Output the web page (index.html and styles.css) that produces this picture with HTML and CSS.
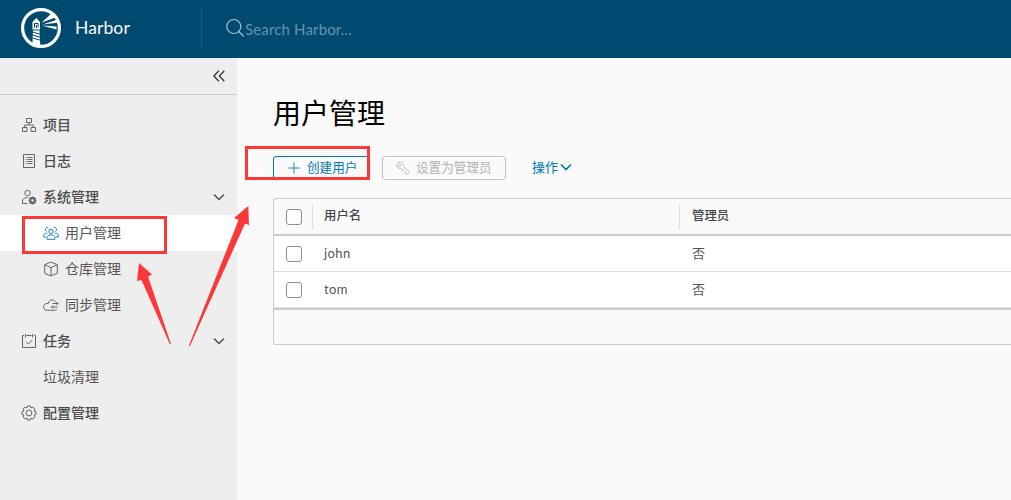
FILE: index.html
```html
<!DOCTYPE html>
<html lang="zh-CN">
<head>
    <meta charset="UTF-8" />
    <meta name="viewport" content="width=device-width, initial-scale=1.0" />
    <title>Harbor</title>
    <link rel="stylesheet" href="styles.css">
</head>
<body>
    <header class="header">
        <svg class="logo" viewBox="0 0 40 40">
            <circle cx="20" cy="20" r="18.4" fill="none" stroke="#fff" stroke-width="3.2" />
            <path d="M20.500 14.800L31.500 4.500l4 4.500zM21.500 16.600L36.500 11.500v3.300zM21 17.600l14.500 1v3z" fill="#fff" />
            <path d="M15.300 10l3.700 4v7.500h-7.500V14z" fill="#fff" />
            <path d="M13.500 19.500v-4h3.600v4M15.300 17v3" fill="none" stroke="#004a70" stroke-width="1" />
            <path d="M12 22.500h6.500l.8 16h-8z" fill="#fff" />
            <path d="M11.500 24l7.500 2.200M11.500 27l7.700 2.200M11.500 30l8 2.200" stroke="#004a70" stroke-width="1" />
        </svg>
        <span class="brand">Harbor</span>
        <div class="search">
            <svg class="search-icon" viewBox="0 0 20 20">
                <circle cx="8.800" cy="8.500" r="7" />
                <path d="M13.700 13.500L18.800 18.500" />
            </svg>
            <span>Search Harbor...</span>
        </div>
    </header>

    <div class="container">
        <nav class="sidenav">
            <div class="collapse">
                <svg viewBox="0 0 12 12"><path d="M5.800 .8L.9 6l4.900 5.200M11.300 .8L6.400 6l4.900 5.200" /></svg>
            </div>
            <a class="item main">
                <svg class="icon" viewBox="0 0 16 16"><path d="M5.500 1.500h5v4h-5zM1.500 10.500h4.500v4H1.500zM10 10.500h4.500v4H10zM8 5.500v2.500M3.700 10.500V8h8.600v2.500" /></svg>
                <span>项目</span>
            </a>
            <a class="item main">
                <svg class="icon" viewBox="0 0 16 16"><path d="M2.500 1.500h11v13h-11zM4.500 4.500h1M6.500 4.500h5M4.500 6.500h1M6.500 6.500h5M4.500 8.500h1M6.500 8.500h5M4.500 10.500h1M6.500 10.500h5" /></svg>
                <span>日志</span>
            </a>
            <a class="item main">
                <svg class="icon" viewBox="0 0 16 16">
                    <circle cx="6.500" cy="4" r="2.700" />
                    <path d="M6.500 14.500h-5V11c1.300-1.700 3-2.500 5.500-2.500" />
                    <circle cx="11.500" cy="11.500" r="2.300" stroke-width="2.200" />
                    <path d="M11.500 7.600v1.200M11.500 14.200v1.200M7.600 11.500h1.200M14.200 11.500h1.200M8.700 8.700l.9.900M13.400 13.400l.9.900M8.700 14.300l.9-.9M13.400 9.600l.9-.9" stroke-width="1.700" />
                </svg>
                <span>系统管理</span>
                <svg class="caret" viewBox="0 0 12 12"><path d="M1 3.500l5 5 5-5" /></svg>
            </a>
            <a class="item sub active">
                <svg class="icon" viewBox="0 0 16 16">
                    <circle cx="8" cy="6.300" r="2.200" />
                    <path d="M4 14.300v-2.600c2-2.400 6-2.400 8 0v2.600zM5.300 2.700a2 2 0 1 0-1.500 3.700M10.700 2.700a2 2 0 1 1 1.500 3.700M4.500 8.300C3 8 1.800 8.500.8 9.500V12H3M11.500 8.300c1.500-.3 2.700.2 3.700 1.200V12H13" />
                </svg>
                <span>用户管理</span>
            </a>
            <a class="item sub">
                <svg class="icon" viewBox="0 0 16 16"><path d="M8 1l6.300 2.700v8.600L8 15l-6.300-2.700V3.700zM1.700 3.700L8 6.600l6.300-2.900M8 6.600V15" /></svg>
                <span>仓库管理</span>
            </a>
            <a class="item sub">
                <svg class="icon" viewBox="0 0 16 16"><path d="M12.500 4.800C10.500 1.800 6 2.200 5.300 6.500 2 6-.3 8.500.8 11c.7 1.700 1.700 2.300 3.200 2.300h7c1.300 0 2.300-.3 2.800-1.300M9.500 6.500H15M13.500 5l1.500 1.500L13.500 8M14.500 10H8.500M10 8.500L8.500 10l1.500 1.500" /></svg>
                <span>同步管理</span>
            </a>
            <a class="item main">
                <svg class="icon" viewBox="0 0 16 16"><path d="M3 2.500H1.500v12h13v-12H13M5.500 2.500h5M4.500 1v3.500M11.500 1v3.500M5 8.700l2.400 2.400L11.300 7" /></svg>
                <span>任务</span>
                <svg class="caret" viewBox="0 0 12 12"><path d="M1 3.500l5 5 5-5" /></svg>
            </a>
            <a class="item leaf"><span>垃圾清理</span></a>
            <a class="item main">
                <svg class="icon" viewBox="0 0 16 16">
                    <circle cx="8" cy="8" r="2.900" />
                    <path d="M6.600 1h2.800l.5 1.900 1.900-.9 2.100 2.100-.9 1.900 2 .6v2.800l-2 .6.9 1.900-2.100 2.100-1.900-.9-.5 1.900H6.600l-.5-1.900-1.900.9-2.100-2.100.9-1.900-2-.6V6.600l2-.6-.9-1.900L4.200 2l1.900.9z" />
                </svg>
                <span>配置管理</span>
            </a>
        </nav>

        <main class="content">
            <h1>用户管理</h1>
            <div class="actions">
                <button class="btn btn-create">
                    <svg viewBox="0 0 16 16"><path d="M8 1.500v13M1.500 8h13" /></svg>
                    <span>创建用户</span>
                </button>
                <button class="btn btn-admin" disabled>
                    <svg viewBox="0 0 16 16"><path d="M2.300 1.500l2.900 2.800-.3 1.700-1.700.3L.9 3.800C.5 6 1.500 8.300 4 8.500l1.500-.2 6.300 6.200c1.600 1.300 3.600-.8 2.500-2.400L8.200 6c.8-3-1.900-6-5.900-4.500z" /><path d="M12.500 12.500h.5" /></svg>
                    <span>设置为管理员</span>
                </button>
                <a class="dropdown">操作<svg viewBox="0 0 12 12"><path d="M1 3.500l5 5 5-5" /></svg></a>
            </div>

            <div class="datagrid">
                <div class="row head">
                    <div class="check"><i class="box"></i></div>
                    <div class="cell name">用户名</div>
                    <div class="cell">管理员</div>
                </div>
                <div class="row">
                    <div class="check"><i class="box"></i></div>
                    <div class="cell name">john</div>
                    <div class="cell">否</div>
                </div>
                <div class="row">
                    <div class="check"><i class="box"></i></div>
                    <div class="cell name">tom</div>
                    <div class="cell">否</div>
                </div>
                <div class="foot"></div>
            </div>
        </main>
    </div>

    <!-- red marks over the page -->
    <svg class="marks" viewBox="0 0 1011 500">
        <rect x="23.500" y="217.500" width="142" height="35" />
        <rect x="246.500" y="147.500" width="122" height="31" />
        <path d="M139 263l13 11.500-4 2L171 344l-1 .5L141.500 280l-4.500 1z" />
        <path d="M248.300 206l.7 19-4-1.500L190 346l-1-.5L238.500 220l-4.500-2z" />
    </svg>
</body>
</html>
```
FILE: styles.css
```css
* {
    box-sizing: border-box;
}

body {
    margin: 0;
    height: 500px;
    overflow: hidden;
    font-family: Lato, "Noto Sans CJK SC", sans-serif;
    font-size: 14px;
    color: #565656;
    background-color: #fafafa;
}

svg {
    flex: none;
    fill: none;
    stroke: currentColor;
}

.header {
    display: flex;
    align-items: center;
    height: 58px;
    padding-left: 21px;
    background-color: #004a70;
    color: #fafafa;
}

.logo {
    width: 40px;
    height: 40px;
    margin-top: -2px;
    stroke: none;
}

.brand {
    width: 126px;
    margin: -4px 0 0 14px;
    font-size: 17.5px;
    letter-spacing: 0.1px;
}

.search {
    display: flex;
    align-items: center;
    height: 40px;
    margin-top: -2px;
    padding-left: 23px;
    border-left: 1px solid #1c5f82;
    color: #6593ab;
    font-size: 15px;
    letter-spacing: 0.15px;
}

.search span {
    margin-top: 1px;
}

.search-icon {
    width: 20px;
    height: 20px;
    color: #a8c3d1;
    stroke-width: 1.2;
}

.container {
    display: flex;
    height: 442px;
}

.sidenav {
    flex: none;
    width: 237px;
    background-color: #eee;
}

.collapse {
    display: flex;
    justify-content: flex-end;
    align-items: center;
    height: 37px;
    margin-bottom: 12px;
    padding-right: 12px;
    border-bottom: 1px solid #ccc;
    color: #333;
}

.collapse svg {
    width: 12px;
    height: 12px;
    stroke-width: 1.3;
}

.item {
    display: flex;
    align-items: center;
    height: 36px;
    padding: 0 12px 0 21px;
    line-height: 36px;
}

.item.main {
    font-weight: 500;
    color: #4c4c4c;
}

.item.sub {
    padding-left: 43px;
}

.item.leaf {
    padding-left: 43px;
}

.item.active {
    background-color: #fff;
}

.icon {
    width: 16px;
    height: 16px;
    margin-right: 6px;
    color: #666;
}

.active .icon {
    color: #1a87c0;
}

.caret {
    width: 12px;
    height: 12px;
    margin-left: auto;
    stroke-width: 1.5;
}

.content {
    flex: 1;
    min-width: 0;
    padding: 35px 0 0 36px;
}

h1 {
    margin: 0;
    height: 63px;
    line-height: 40px;
    font-size: 28px;
    font-weight: 400;
    color: #000;
}

.actions {
    display: flex;
    height: 24px;
    margin-bottom: 18px;
}

.btn {
    display: flex;
    align-items: center;
    height: 24px;
    padding: 0 13px;
    border: 1px solid #0079b8;
    border-radius: 3px;
    background-color: transparent;
    color: #0079b8;
    font-family: inherit;
    font-size: 12.6px;
    line-height: 22px;
    white-space: nowrap;
}

.btn svg {
    width: 14px;
    height: 14px;
    margin-right: 6px;
}

.btn-create {
    width: 97px;
    border-radius: 3px 0 0 3px;
}

.btn-admin {
    width: 124px;
    margin-left: 12px;
    border-color: #c1c1c1;
    color: #b3b3b3;
}

.dropdown {
    display: flex;
    align-items: center;
    margin-left: 26px;
    color: #0079b8;
    font-size: 13px;
    line-height: 22px;
    height: 22px;
}

.dropdown svg {
    width: 12px;
    height: 12px;
    margin-left: 2px;
    stroke-width: 1.7;
}

.datagrid {
    height: 147px;
    border: 1px solid #ccc;
    border-right: 0;
    border-radius: 3px 0 0 3px;
}

.row {
    display: flex;
    height: 36px;
    border-bottom: 1px solid #ddd;
    background-color: #fff;
    font-size: 13px;
    line-height: 35px;
}

.row.head {
    height: 37px;
    border-bottom: 2px solid #ccc;
    border-radius: 3px 0 0 0;
    background-color: #fafafa;
    font-size: 12.4px;
    font-weight: 500;
    color: #454545;
}

.check {
    display: flex;
    align-items: center;
    width: 38px;
    padding-left: 12px;
}

.box {
    width: 16px;
    height: 16px;
    border: 1px solid #8f8f8f;
    border-radius: 3px;
    background-color: #fff;
}

.cell {
    flex: none;
    padding-left: 12px;
}

.cell.name {
    width: 367px;
    padding-left: 12px;
    letter-spacing: 0.4px;
}

.cell + .cell {
    padding-left: 13px;
}

.head .name {
    letter-spacing: 0;
}

.head .cell {
    position: relative;
    line-height: 34px;
}

.head .cell::before {
    content: "";
    position: absolute;
    left: 0;
    top: 6px;
    height: 24px;
    border-left: 1px solid #ddd;
}

.foot {
    height: 36px;
    border-top: 2px solid #ccc;
}

.marks {
    position: absolute;
    left: 0;
    top: 0;
    width: 1011px;
    height: 500px;
    pointer-events: none;
}

.marks rect {
    stroke: #fc3838;
    stroke-width: 3;
}

.marks path {
    fill: #fc3838;
    stroke: none;
}
```
